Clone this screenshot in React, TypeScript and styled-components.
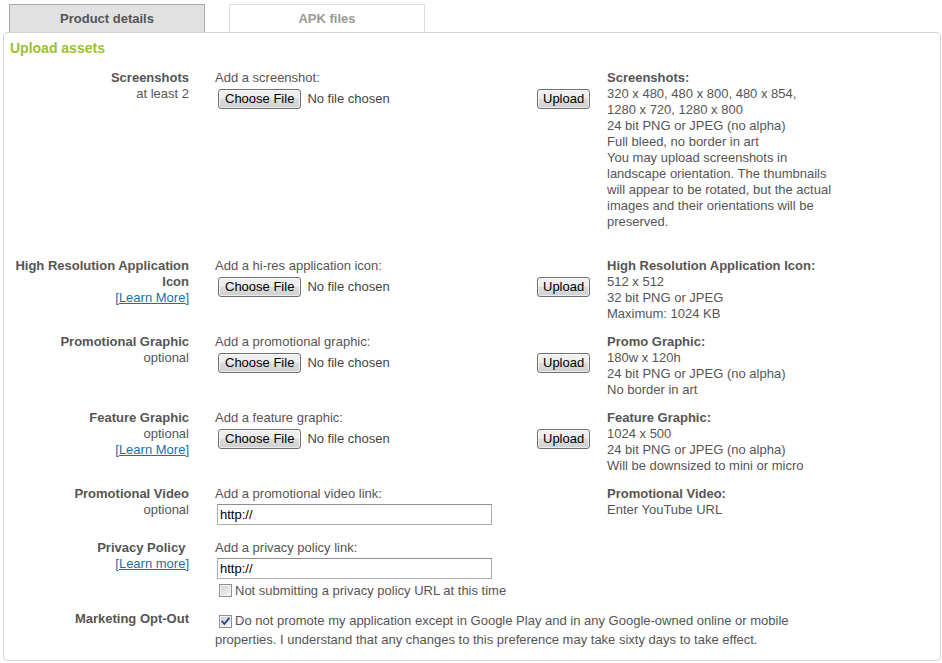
import React from 'react';
import styled, { createGlobalStyle } from 'styled-components';

const GlobalStyle = createGlobalStyle`
  html, body { margin: 0; padding: 0; background: #fff; }
  body {
    font-family: "Liberation Sans", Arial, sans-serif;
    font-size: 13px;
    line-height: 16px;
    color: #555;
  }
`;

const Page = styled.div`
  padding: 4px 1px 0 3px;
`;

const TabBar = styled.div`
  display: flex;
  gap: 24px;
  padding-left: 6px;
`;

const Tab = styled.div<{ $active?: boolean }>`
  width: 196px;
  height: 28px;
  box-sizing: border-box;
  display: flex;
  align-items: center;
  justify-content: center;
  font-weight: bold;
  border: 1px solid ${p => (p.$active ? '#a9a9a9' : '#dddddd')};
  border-bottom: none;
  background: ${p => (p.$active ? '#e1e1e1' : '#ffffff')};
  color: ${p => (p.$active ? '#555555' : '#999999')};
`;

const Panel = styled.div`
  border: 1px solid #d5d5d5;
  border-radius: 4px;
  padding: 7px 0 11px 0;
`;

const Heading = styled.h2`
  margin: 0 0 14px 6px;
  font-size: 14px;
  line-height: 16px;
  font-weight: bold;
  color: #9ac12e;
`;

const Rows = styled.div`
  display: flex;
  flex-direction: column;
  gap: 12px;
`;

const Row = styled.div<{ $extra?: boolean }>`
  display: grid;
  grid-template-columns: 211px 321px 71px 238px;
  padding-bottom: ${p => (p.$extra ? 16 : 0)}px;
`;

const LabelCell = styled.div`
  text-align: right;
  padding-right: 26px;
`;

const LabelTitle = styled.div`
  font-weight: bold;
`;

const LearnLink = styled.a`
  color: #1c6fa6;
  text-decoration: underline;
`;

const FieldCell = styled.div``;

const FileLine = styled.div`
  display: flex;
  align-items: center;
  gap: 6px;
  height: 20px;
  margin-top: 3px;
  padding-left: 3px;
  color: #444;
`;

const NativeButton = styled.button`
  font-family: "Liberation Sans", Arial, sans-serif;
  font-size: 13px;
  line-height: 18px;
  color: #000;
  height: 20px;
  padding: 0 6px;
  box-sizing: border-box;
  border: 1px solid #707070;
  border-radius: 3px;
  background: linear-gradient(#f2f2f2 0%, #ebebeb 50%, #dddddd 50%, #cfcfcf 100%);
  box-shadow: inset 0 0 0 1px rgba(255, 255, 255, 0.6);
  cursor: default;
`;

const UploadCell = styled.div`
  padding-top: 19px;
  padding-left: 1px;
`;

const UploadButton = styled(NativeButton)`
  padding: 0 5px;
`;

const InfoCell = styled.div``;

const InfoTitle = styled.div`
  font-weight: bold;
`;

const TextInput = styled.input`
  display: block;
  margin: 2px 0 3px 2px;
  width: 275px;
  height: 21px;
  box-sizing: border-box;
  border: 1px solid #abadb3;
  border-top-color: #8e8f8f;
  padding: 0 2px;
  font-family: "Liberation Sans", Arial, sans-serif;
  font-size: 13px;
  color: #000;
  outline: none;
`;

const CheckLine = styled.div<{ $tall?: boolean }>`
  margin-top: ${p => (p.$tall ? 0 : 4)}px;
  line-height: ${p => (p.$tall ? 19 : 16)}px;
`;

const CheckSpan = styled.div`
  grid-column: 2 / 5;
`;

const CheckBox = styled.span<{ $checked?: boolean }>`
  display: inline-flex;
  align-items: center;
  justify-content: center;
  width: 13px;
  height: 13px;
  box-sizing: border-box;
  border: 1px solid #8f8f8f;
  background: linear-gradient(135deg, #cfcfcf 0%, #f7f7f7 100%);
  box-shadow: inset 0 0 0 1px #f4f4f4;
  vertical-align: -2px;
  margin: 0 3px 0 4px;
`;

const CheckMark = () => (
  <svg width="11" height="11" viewBox="0 0 11 11">
    <path d="M2.2 5.6 L4.4 7.9 L8.8 2.6" fill="none" stroke="#2a4a8c" strokeWidth="1.9" strokeLinecap="square" />
  </svg>
);

type FileRowProps = {
  title: React.ReactNode;
  sub?: string;
  learn?: string;
  prompt: string;
  infoTitle: string;
  info: React.ReactNode;
  extra?: boolean;
};

const FileRow = ({ title, sub, learn, prompt, infoTitle, info, extra }: FileRowProps) => (
  <Row $extra={extra}>
    <LabelCell>
      <LabelTitle>{title}</LabelTitle>
      {sub && <div>{sub}</div>}
      {learn && <LearnLink href="#">[{learn}]</LearnLink>}
    </LabelCell>
    <FieldCell>
      <div>{prompt}</div>
      <FileLine>
        <NativeButton type="button">Choose File</NativeButton>
        <span>No file chosen</span>
      </FileLine>
    </FieldCell>
    <UploadCell>
      <UploadButton type="button">Upload</UploadButton>
    </UploadCell>
    <InfoCell>
      <InfoTitle>{infoTitle}</InfoTitle>
      {info}
    </InfoCell>
  </Row>
);

export default function App() {
  return (
    <>
      <GlobalStyle />
      <Page>
        <TabBar>
          <Tab $active>Product details</Tab>
          <Tab>APK files</Tab>
        </TabBar>
        <Panel>
          <Heading>Upload assets</Heading>
          <Rows>
            <FileRow
              extra
              title="Screenshots"
              sub="at least 2"
              prompt="Add a screenshot:"
              infoTitle="Screenshots:"
              info={
                <>
                  320 x 480, 480 x 800, 480 x 854,
                  <br />
                  1280 x 720, 1280 x 800
                  <br />
                  24 bit PNG or JPEG (no alpha)
                  <br />
                  Full bleed, no border in art
                  <br />
                  You may upload screenshots in landscape orientation. The thumbnails will appear to be
                  rotated, but the actual images and their orientations will be preserved.
                </>
              }
            />
            <FileRow
              title="High Resolution Application Icon"
              learn="Learn More"
              prompt="Add a hi-res application icon:"
              infoTitle="High Resolution Application Icon:"
              info={
                <>
                  512 x 512
                  <br />
                  32 bit PNG or JPEG
                  <br />
                  Maximum: 1024 KB
                </>
              }
            />
            <FileRow
              title="Promotional Graphic"
              sub="optional"
              prompt="Add a promotional graphic:"
              infoTitle="Promo Graphic:"
              info={
                <>
                  180w x 120h
                  <br />
                  24 bit PNG or JPEG (no alpha)
                  <br />
                  No border in art
                </>
              }
            />
            <FileRow
              title="Feature Graphic"
              sub="optional"
              learn="Learn More"
              prompt="Add a feature graphic:"
              infoTitle="Feature Graphic:"
              info={
                <>
                  1024 x 500
                  <br />
                  24 bit PNG or JPEG (no alpha)
                  <br />
                  Will be downsized to mini or micro
                </>
              }
            />
            <Row>
              <LabelCell>
                <LabelTitle>Promotional Video</LabelTitle>
                <div>optional</div>
              </LabelCell>
              <FieldCell>
                <div>Add a promotional video link:</div>
                <TextInput defaultValue="http://" />
              </FieldCell>
              <div />
              <InfoCell>
                <InfoTitle>Promotional Video:</InfoTitle>
                Enter YouTube URL
              </InfoCell>
            </Row>
            <Row>
              <LabelCell>
                <LabelTitle>Privacy Policy{'\u00a0'}</LabelTitle>
                <LearnLink href="#">[Learn more]</LearnLink>
              </LabelCell>
              <FieldCell>
                <div>Add a privacy policy link:</div>
                <TextInput defaultValue="http://" />
                <CheckLine>
                  <CheckBox />
                  Not submitting a privacy policy URL at this time
                </CheckLine>
              </FieldCell>
            </Row>
            <Row>
              <LabelCell>
                <LabelTitle>Marketing Opt-Out</LabelTitle>
              </LabelCell>
              <CheckSpan>
                <CheckLine $tall>
                  <CheckBox $checked>
                    <CheckMark />
                  </CheckBox>
                  Do not promote my application except in Google Play and in any Google-owned online or
                  mobile properties. I understand that any changes to this preference may take sixty days to
                  take effect.
                </CheckLine>
              </CheckSpan>
            </Row>
          </Rows>
        </Panel>
      </Page>
    </>
  );
}
